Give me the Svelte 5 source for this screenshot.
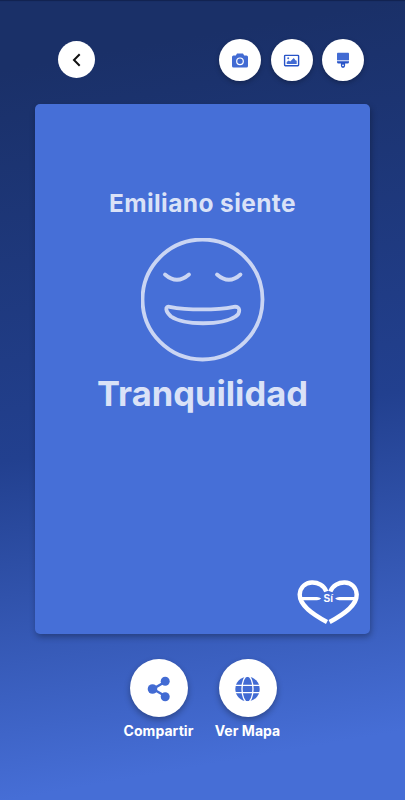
<script lang="ts">
  let { name = 'Emiliano', emotion = 'Tranquilidad' } = $props();
</script>

<div class="page">
  <header class="toolbar">
    <button class="round back" aria-label="Volver">
      <svg width="37" height="37" viewBox="0 0 37 37">
        <path d="M21.700 13.300 16 19l5.700 5.700" fill="none" stroke="#111" stroke-width="2" />
      </svg>
    </button>

    <div class="tools">
      <button class="round tool" aria-label="Cámara">
        <svg width="42" height="42" viewBox="0 0 42 42">
          <path d="M18 14.500h6l1.200 2H27.500a1.500 1.500 0 0 1 1.500 1.500v9a1.500 1.500 0 0 1-1.500 1.500h-13A1.500 1.500 0 0 1 13 27v-9a1.500 1.500 0 0 1 1.500-1.500h2.300z" fill="#426bd3" />
          <circle cx="21" cy="22.300" r="3.300" fill="none" stroke="#fff" stroke-width="1.200" />
        </svg>
      </button>
      <button class="round tool" aria-label="Imagen">
        <svg width="42" height="42" viewBox="0 0 42 42">
          <rect x="13.600" y="16.400" width="14" height="10.400" rx="0.700" fill="none" stroke="#2854c8" stroke-width="1.400" />
          <path d="M15.700 25v-2l2-1.600 1.500 1 3.600-3.400 1.600 2.200 1.300.5V25z" fill="#426bd3" />
          <circle cx="17.200" cy="19.200" r="1" fill="#426bd3" />
        </svg>
      </button>
      <button class="round tool" aria-label="Fondo">
        <svg width="42" height="42" viewBox="0 0 42 42">
          <path d="M15 14.500q0-.8.8-.8h10.400q.8 0 .8.800V21.300H15z" fill="#426bd3" />
          <path d="M15 21.300h12v1H15z" fill="#b8c8f1" />
          <path d="M15 22.300h12v.7q0 1.600-1.600 1.600h-2.300v2.200a2.100 2.100 0 0 1-4.200 0v-2.200h-2.300q-1.600 0-1.600-1.600z" fill="#2854c8" />
          <circle cx="21" cy="26.300" r="0.900" fill="#fff" />
        </svg>
      </button>
    </div>
  </header>

  <main class="card">
    <h2>{name} siente</h2>
    <svg class="face" width="124" height="124" viewBox="0 0 124 124">
      <g fill="none" stroke="#cad5f3" stroke-width="3.800" stroke-linecap="round" stroke-linejoin="round">
        <circle cx="61.500" cy="61.500" r="60" />
        <path d="M24 36.500Q36 47 48 36.500M76 36.500Q88 47 99.500 36.500" />
        <path d="M28.500 68.800C47 72.300 75 72.300 93 68.800 100 68 99.500 75.500 94.500 78.500 81 87.500 43 87.500 30 78.500 24 73 24 68 28.500 68.800Z" />
      </g>
    </svg>
    <h1>{emotion}</h1>

    <svg class="logo" width="64" height="46" viewBox="0 0 64 46">
      <g fill="none" stroke="#fff" stroke-width="4.400">
        <path d="M29.300 11.500C25-.5 4-1.500 2.700 14.500 2.500 25.500 16 34.500 30 42" />
        <path d="M33.300 11.500C38-.5 58.500-1.500 59.700 14.500 60 25.500 46.500 34.500 32.600 42" />
      </g>
      <path d="M3 16.900H20q2.500.2 4.200 1.700-1.700 1.500-4.200 1.700H4zM60 16.900H42.300q-2.500.2-4.200 1.700 1.700 1.500 4.200 1.700H59z" fill="#fff" />
      <text x="31.300" y="21.900" text-anchor="middle">Sí</text>
    </svg>
  </main>

  <footer class="actions">
    <div class="action">
      <button class="round big" aria-label="Compartir">
        <svg width="58" height="58" viewBox="0 0 58 58">
          <path d="M36 22.200 23 30 36 37.500" fill="none" stroke="#426bd3" stroke-width="2.500" />
          <g fill="#426bd3">
            <circle cx="22.500" cy="30" r="4.800" />
            <circle cx="35.200" cy="22.300" r="4.500" />
            <circle cx="35.200" cy="37.700" r="4.500" />
          </g>
        </svg>
      </button>
      <span>Compartir</span>
    </div>
    <div class="action">
      <button class="round big" aria-label="Ver Mapa">
        <svg width="58" height="58" viewBox="0 0 58 58">
          <circle cx="28.500" cy="30" r="12.200" fill="#426bd3" />
          <g fill="none" stroke="#fff" stroke-width="1.300">
            <ellipse cx="28.500" cy="30" rx="5.500" ry="13" />
            <path d="M16 26.300h26M16 33.700h26" />
          </g>
        </svg>
      </button>
      <span>Ver Mapa</span>
    </div>
  </footer>
</div>

<style>
  :global(body) {
    margin: 0;
  }

  .page {
    box-sizing: border-box;
    height: 800px;
    padding: 39px 35px 0;
    overflow: hidden;
    background: linear-gradient(170deg, #1a3068 8%, #22408f 53%, #466ed6 92%);
    box-shadow: inset 0 2px 1px -1px #12234f;
    font-family: Inter, 'Liberation Sans', sans-serif;
    color: #fff;
  }

  .toolbar {
    display: flex;
    justify-content: space-between;
    align-items: center;
    height: 42px;
    padding: 0 6px 0 23px;
  }

  .tools {
    display: flex;
    gap: 9.5px;
  }

  .round {
    display: block;
    padding: 0;
    border: none;
    border-radius: 50%;
    background: #fff;
  }

  .round svg {
    display: block;
  }

  .back {
    width: 37px;
    height: 37px;
    margin-bottom: 1px;
  }

  .tool {
    width: 42px;
    height: 42px;
    box-shadow: 0 2px 5px rgba(0, 0, 0, 0.25);
  }

  .card {
    box-sizing: border-box;
    display: flex;
    flex-direction: column;
    align-items: center;
    height: 530px;
    margin-top: 23px;
    padding: 83px 9px 8px;
    border-radius: 5px;
    background: #466fd7;
    box-shadow: 1px 3px 6px rgba(0, 0, 0, 0.3);
  }

  h1,
  h2 {
    margin: 0;
    color: #dae2f7;
    font-weight: 700;
    white-space: nowrap;
  }

  h2 {
    font-size: 24.5px;
    line-height: 32px;
    letter-spacing: 0.4px;
  }

  h1 {
    margin-top: 11px;
    font-size: 34.5px;
    line-height: 42px;
  }

  .face {
    margin-top: 19px;
  }

  .logo {
    align-self: flex-end;
    margin-top: auto;
  }

  .logo text {
    font: 700 10px 'Liberation Sans', sans-serif;
    fill: #fff;
  }

  .actions {
    display: flex;
    justify-content: center;
    gap: 19px;
    margin-top: 25px;
    padding-left: 1px;
  }

  .action {
    display: flex;
    flex-direction: column;
    align-items: center;
    width: 70px;
  }

  .big {
    width: 58px;
    height: 58px;
    box-shadow: 0 3px 6px rgba(0, 0, 0, 0.3);
  }

  .action span {
    margin-top: 4px;
    font-size: 14px;
    font-weight: 700;
    line-height: 20px;
    letter-spacing: 0.05px;
    white-space: nowrap;
  }
</style>
